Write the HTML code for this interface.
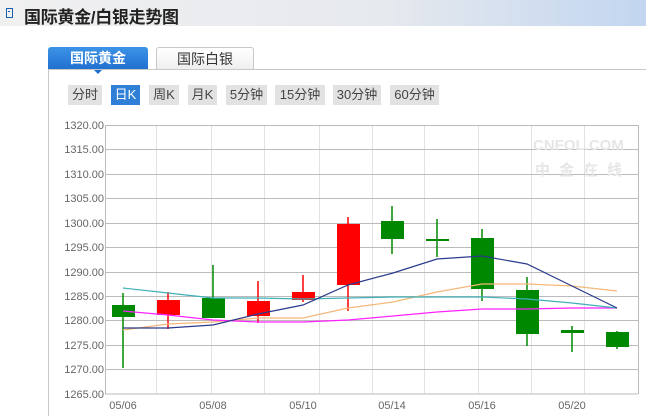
<!DOCTYPE html>
<html><head><meta charset="utf-8"><style>
*{margin:0;padding:0;box-sizing:border-box}
body{width:646px;height:416px;background:#fff;position:relative;overflow:hidden;font-family:"Liberation Sans","Noto Sans CJK SC",sans-serif}
.hd{position:absolute;left:0;top:0;width:646px;height:26px;background:linear-gradient(90deg,#f0f0f0 0%,#e6e9ee 60%,#c2d6f0 100%)}
.hd .ic{position:absolute;left:6px;top:8px;width:7px;height:10px;border:1.5px solid #1a5fb4}
.hd .ic:after{content:"";position:absolute;left:1px;top:2px;width:2px;height:1px;background:#1a5fb4}
.hd .t{position:absolute;left:24px;top:3px;font-size:17px;color:#222;font-weight:bold;letter-spacing:-0.3px}
.tab1{position:absolute;left:48px;top:47px;width:100px;height:23px;background:linear-gradient(#3d94e6,#1f6fd0);border-radius:3px 3px 0 0;color:#fff;font-weight:bold;font-size:14px;text-align:center;line-height:23px}
.tab1:after{content:"";position:absolute;left:46px;top:23px;border:4px solid transparent;border-top:4px solid #1f6fd0}
.tab2{position:absolute;left:156px;top:47px;width:98px;height:23px;background:linear-gradient(#fff,#eee);border:1px solid #c8c8c8;border-bottom:none;border-radius:3px 3px 0 0;color:#333;font-size:14px;text-align:center;line-height:22px}
.ln{position:absolute;left:48px;top:69px;width:598px;height:1px;background:#c8c8c8}
.vl{position:absolute;left:48px;top:69px;width:1px;height:347px;background:#c8c8c8}
.b{position:absolute;top:85px;height:20px;background:#e2e2e2;color:#444;font-size:13px;line-height:20px;text-align:center}
.b.on{background:#2f7fd6;color:#fff}
</style></head><body>
<div class="hd"><div class="ic"></div><div class="t">国际黄金/白银走势图</div></div>
<div class="tab1">国际黄金</div>
<div class="tab2">国际白银</div>
<div class="ln"></div><div class="vl"></div>
<div class="b" style="left:68px;width:34px">分时</div>
<div class="b on" style="left:111px;width:29px">日K</div>
<div class="b" style="left:149px;width:30px">周K</div>
<div class="b" style="left:188px;width:29px">月K</div>
<div class="b" style="left:226px;width:41px">5分钟</div>
<div class="b" style="left:275px;width:50px">15分钟</div>
<div class="b" style="left:333px;width:48px">30分钟</div>
<div class="b" style="left:390px;width:49px">60分钟</div>
<svg style="position:absolute;left:0;top:0" width="646" height="416" font-family="Liberation Sans, sans-serif">
<g stroke="#e2e2e2" stroke-width="1">
<line x1="156.5" y1="125" x2="156.5" y2="394"/><line x1="211.5" y1="125" x2="211.5" y2="394"/><line x1="264.5" y1="125" x2="264.5" y2="394"/><line x1="319.5" y1="125" x2="319.5" y2="394"/><line x1="372.5" y1="125" x2="372.5" y2="394"/><line x1="424.5" y1="125" x2="424.5" y2="394"/><line x1="478.5" y1="125" x2="478.5" y2="394"/><line x1="531.5" y1="125" x2="531.5" y2="394"/><line x1="584.5" y1="125" x2="584.5" y2="394"/>
</g>
<g stroke="#bbb" stroke-width="1">
<line x1="105" y1="125.5" x2="638" y2="125.5"/><line x1="105" y1="149.5" x2="638" y2="149.5"/><line x1="105" y1="174.5" x2="638" y2="174.5"/><line x1="105" y1="198.5" x2="638" y2="198.5"/><line x1="105" y1="223.5" x2="638" y2="223.5"/><line x1="105" y1="247.5" x2="638" y2="247.5"/><line x1="105" y1="272.5" x2="638" y2="272.5"/><line x1="105" y1="296.5" x2="638" y2="296.5"/><line x1="105" y1="320.5" x2="638" y2="320.5"/><line x1="105" y1="345.5" x2="638" y2="345.5"/><line x1="105" y1="369.5" x2="638" y2="369.5"/><line x1="105" y1="394" x2="638" y2="394"/>
<line x1="105.5" y1="125" x2="105.5" y2="394"/><line x1="638.5" y1="125" x2="638.5" y2="394"/>
</g>
<g fill="#e6e6e6" font-weight="bold"><text x="533" y="150" font-size="15">CNFOL.COM</text><text x="535" y="175" font-size="15" letter-spacing="9" font-family="Noto Sans CJK SC">中金在线</text></g>
<g font-size="11" fill="#666" text-anchor="end">
<text x="104" y="129">1320.00</text><text x="104" y="153">1315.00</text><text x="104" y="178">1310.00</text><text x="104" y="202">1305.00</text><text x="104" y="227">1300.00</text><text x="104" y="251">1295.00</text><text x="104" y="276">1290.00</text><text x="104" y="300">1285.00</text><text x="104" y="324">1280.00</text><text x="104" y="349">1275.00</text><text x="104" y="373">1270.00</text><text x="104" y="398">1265.00</text>
</g>
<g font-size="11" fill="#666" text-anchor="middle">
<text x="123" y="409">05/06</text><text x="213" y="409">05/08</text><text x="303" y="409">05/10</text><text x="392" y="409">05/14</text><text x="482" y="409">05/16</text><text x="572" y="409">05/20</text>
</g>
<g stroke="#008800" stroke-width="1.5">
<line x1="123" y1="293" x2="123" y2="368"/><line x1="213" y1="265" x2="213" y2="318"/><line x1="392" y1="206" x2="392" y2="254"/><line x1="437" y1="219" x2="437" y2="257"/><line x1="482" y1="229" x2="482" y2="301"/><line x1="527" y1="277" x2="527" y2="346"/><line x1="572" y1="326" x2="572" y2="352"/><line x1="617" y1="331" x2="617" y2="349"/>
</g>
<g stroke="#ff0000" stroke-width="1.5">
<line x1="168" y1="292" x2="168" y2="329"/><line x1="258" y1="281" x2="258" y2="323"/><line x1="303" y1="275" x2="303" y2="302"/><line x1="348" y1="217" x2="348" y2="311"/>
</g>
<g fill="#008800">
<rect x="112" y="305" width="23" height="12"/><rect x="202" y="298" width="23" height="20"/><rect x="381" y="221" width="23" height="18"/><rect x="426" y="239" width="23" height="2"/><rect x="471" y="238" width="23" height="51"/><rect x="516" y="290" width="23" height="44"/><rect x="561" y="330" width="23" height="3"/><rect x="606" y="332" width="23" height="15"/>
</g>
<g fill="#ff0000">
<rect x="157" y="300" width="23" height="15"/><rect x="247" y="301" width="23" height="15"/><rect x="292" y="292" width="23" height="8"/><rect x="337" y="224" width="23" height="61"/>
</g>
<g fill="none" stroke-width="1.2">
<polyline stroke="#f5b87a" points="123,330 168,324 213,322 258,318 303,318 348,308 393,302 437,292 482,284 527,284 572,286 617,291"/>
<polyline stroke="#ff22ff" points="123,311 168,315 213,320 258,322 303,322 348,320 393,316 437,312 482,309 527,309 572,308 617,308"/>
<polyline stroke="#3fb0b8" points="123,288 168,293 213,298 258,298 303,299 348,298 393,297 437,297 482,297 527,299 572,303 617,308"/>
<polyline stroke="#2a3a8c" points="123,328 168,328 213,325 258,314 303,305 348,285 393,273 437,259 482,256 527,264 572,286 617,308"/>
</g>
</svg>
</body></html>
